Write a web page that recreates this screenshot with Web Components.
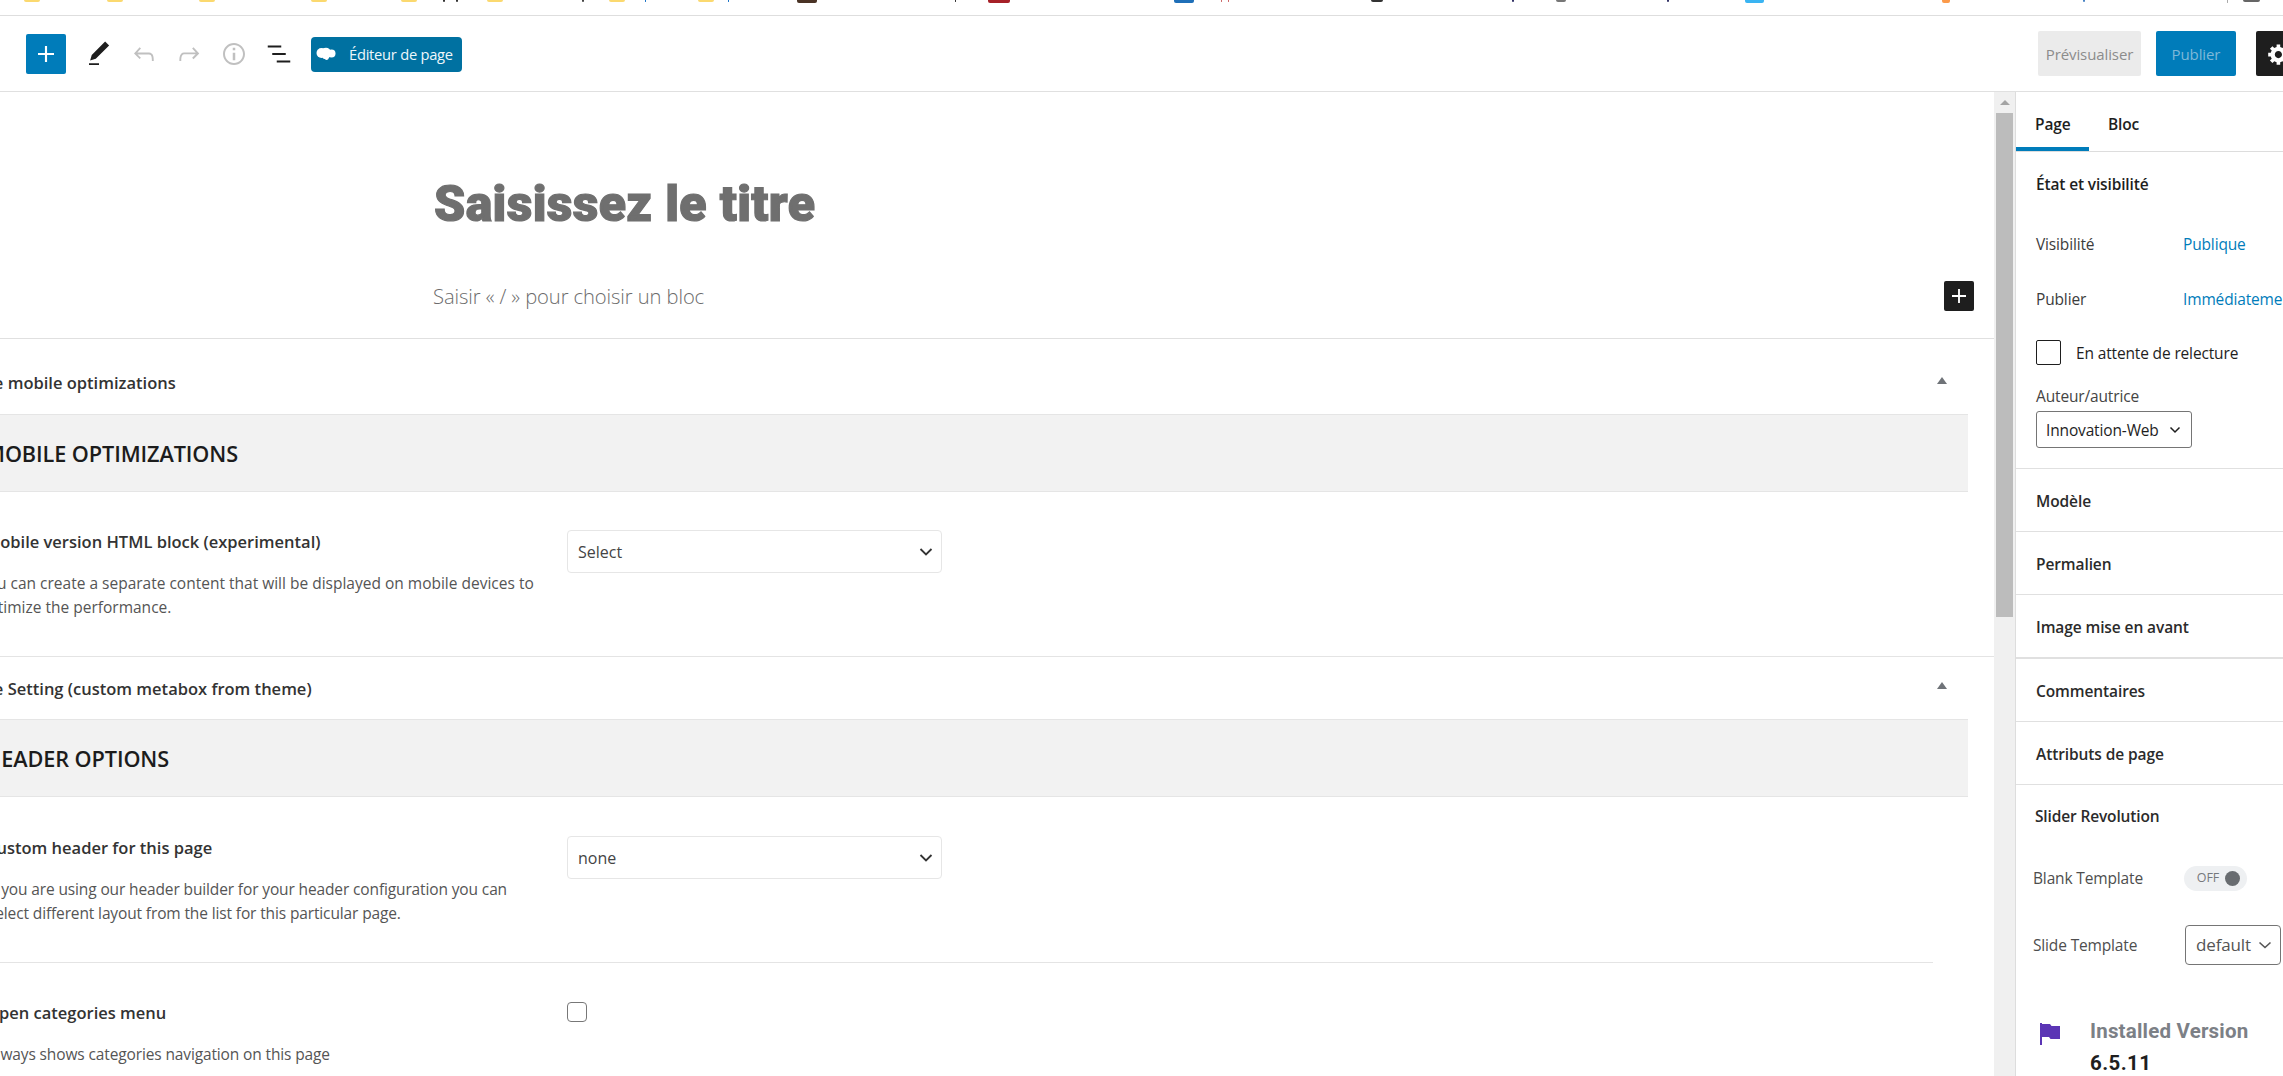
<!DOCTYPE html>
<html lang="fr"><head><meta charset="utf-8"><title>Éditeur</title>
<style>
html,body{margin:0;padding:0;background:#fff;overflow:hidden}
body{width:2283px;height:1076px;font-family:"Open Sans","Noto Sans",sans-serif;color:#1e1e1e}
</style></head><body>
<wp-app>
  <bookmark-strip slot="strip"></bookmark-strip>
  <wp-toolbar slot="toolbar"></wp-toolbar>
  <editor-main slot="main">
    <title-block></title-block>
    <meta-box heading="Page mobile optimizations" band="MOBILE OPTIMIZATIONS" pad-top="34" head-h="75" tri="38" style="--band-off:-15px">
      <meta-field label="Mobile version HTML block (experimental)" top="38" bottom="36" label-off="-15px" desc-off="-6px" style="--ds:0px">
        <span slot="desc">You can create a separate content that will be displayed on mobile devices to<br>optimize the performance.</span>
        <wp-select slot="control" value="Select"></wp-select>
      </meta-field>
    </meta-box>
    <meta-box heading="Page Setting (custom metabox from theme)" band="HEADER OPTIONS" pad-top="22" head-h="63" tri="25" ruled style="--band-off:-15px">
      <meta-field label="Custom header for this page" top="39" bottom="36" label-off="-14px" desc-off="2px" rule>
        <span slot="desc">If you are using our header builder for your header configuration you can<br>select different layout from the list for this particular page.</span>
        <wp-select slot="control" value="none"></wp-select>
      </meta-field>
      <meta-field label="Open categories menu" top="38" bottom="0" label-off="-14px" desc-off="1px">
        <span slot="desc">Always shows categories navigation on this page</span>
        <wp-check slot="control"></wp-check>
      </meta-field>
    </meta-box>
  </editor-main>
  <fake-scrollbar slot="scroll"></fake-scrollbar>
  <wp-sidebar slot="side"></wp-sidebar>
</wp-app>
<script>
const icon=(d,size=24,vb='0 0 24 24',fill='currentColor')=>`<svg width="${size}" height="${size}" viewBox="${vb}" fill="${fill}" aria-hidden="true"><path d="${d}"/></svg>`;
const P={
 plus:"M18 11.2h-5.2V6h-1.6v5.2H6v1.6h5.2V18h1.6v-5.2H18z",
 pen:"M20.1 5.1L16.9 2 6.2 12.7l-1.3 4.4 4.5-1.3L20.1 5.1zM4 20.8h8v-1.5H4v1.5z",
 undo:"M18.3 11.7c-.6-.6-1.4-.9-2.3-.9H6.7l2.9-3.3-1.1-1-4.5 5L8.5 16l1-1-2.7-2.7H16c.5 0 .9.2 1.3.5 1 1 1 3.4 1 4.5v.3h1.5v-.2c0-1.5 0-4.3-1.5-5.7z",
 redo:"M15.6 6.5l-1.1 1 2.9 3.3H8c-.9 0-1.7.3-2.3.9-1.4 1.5-1.4 4.2-1.4 5.6v.2h1.5v-.3c0-1.1 0-3.5 1-4.5.3-.3.7-.5 1.3-.5h9.2L14.5 15l1.1 1.1 4.6-4.6-4.6-5z",
 info:"M12 3.2c-4.8 0-8.8 3.9-8.8 8.8 0 4.8 3.9 8.8 8.8 8.8 4.8 0 8.8-3.9 8.8-8.8 0-4.8-4-8.8-8.8-8.8zm0 16c-4 0-7.2-3.3-7.2-7.2C4.8 8 8 4.8 12 4.8s7.2 3.3 7.2 7.2c0 4-3.2 7.2-7.2 7.2zM11 17h2v-6h-2v6zm0-8h2V7h-2v2z",
 list:"M13.8 5.2H3v1.5h10.8V5.2zm-3.6 12v1.5H21v-1.5H10.2zm7.2-6H6.6v1.5h10.8v-1.5z",
 cog:"M18 12h-2.18c-.17.7-.44 1.35-.81 1.93l1.54 1.54-2.1 2.1-1.54-1.54c-.58.36-1.23.63-1.91.79V19H8v-2.18c-.68-.16-1.33-.43-1.91-.79l-1.54 1.54-2.12-2.12 1.54-1.54c-.36-.58-.63-1.23-.79-1.91H1V9.03h2.17c.16-.7.44-1.35.8-1.94L2.43 5.55l2.1-2.1 1.54 1.54c.58-.37 1.24-.64 1.93-.81V2h3v2.18c.68.16 1.33.43 1.91.79l1.54-1.54 2.12 2.12-1.54 1.54c.36.59.64 1.24.8 1.94H18V12zm-8.5 1.5c1.66 0 3-1.34 3-3s-1.34-3-3-3-3 1.34-3 3 1.34 3 3 3z"
};
function def(name,css,html,init){
 customElements.define(name,class extends HTMLElement{
  connectedCallback(){
   if(this.shadowRoot)return;
   const r=this.attachShadow({mode:'open'});
   r.innerHTML=`<style>${css}</style>`+(typeof html==='function'?html(this):html);
   if(init)init(this,r);
  }
 });
}
const FONT='"Open Sans","Noto Sans",sans-serif';
def('wp-app',`:host{display:grid;width:2283px;height:1076px;overflow:hidden;grid-template-columns:1994px 21px 268px;grid-template-rows:16px 76px 984px}
 .s,.t{grid-column:1/4;min-width:0}`,
 `<div class="s"><slot name="strip"></slot></div><div class="t"><slot name="toolbar"></slot></div><slot name="main"></slot><slot name="scroll"></slot><slot name="side"></slot>`);

def('bookmark-strip',`:host{display:flex;height:15px;border-bottom:1px solid #dedede;align-items:flex-start;overflow:hidden}
 i{display:block;flex:none;height:2px;border-radius:0 0 2px 2px}
 .y{width:16px;background:#fbd96f}`,
 ()=>{const items=[[24,16,'y'],[107,16,'y'],[199,16,'y'],[311,16,'y'],[401,16,'y'],[443,2,'#333'],[456,2,'#333'],[487,16,'y'],[582,2,'#444'],[609,16,'y'],[645,1,'#1a73c7'],[698,16,'y'],[728,1,'#1a73c7'],[797,20,'#4a3325',3],[955,1,'#333'],[988,22,'#a62028',3],[1174,20,'#1f6fb8',3],[1221,1,'#c66'],[1228,1,'#c66'],[1371,12,'#333',2],[1512,2,'#336'],[1556,10,'#777',2],[1667,2,'#336'],[1745,19,'#3ab4f2',3],[1942,8,'#fb9a4b',3],[2083,2,'#4a84c4'],[2227,1,'#aaa',3],[2243,17,'#666',2]];
  let x=0,o='';for(const [a,w,c,h] of items){const y=c==='y';o+=`<i class="${y?'y':''}" style="margin-left:${a-x}px;width:${w}px;${y?'':`background:${c};`}${h?`height:${h}px`:''}"></i>`;x=a+w;}return o;});

def('tool-icon',`:host{display:flex;width:30px;height:30px;flex:none;color:var(--c,#1e1e1e)} svg{width:30px;height:30px;display:block}`,
 h=>icon(P[h.getAttribute('name')],30));

def('wp-toolbar',`:host{display:flex;height:75px;border-bottom:1px solid #e0e0e0;align-items:center;padding-left:26px;overflow:hidden;font-family:${FONT}}
 .add{width:40px;height:40px;background:#007cba;color:#fff;border-radius:2px;display:flex;align-items:center;justify-content:center;flex:none}
 .add svg{width:32px;height:32px}
 .tools{display:flex;align-items:center;gap:15px;margin-left:18px}
 .dim{--c:#c0c0c0}
 .edit{margin-left:17px;margin-top:1px;height:35px;width:151px;box-sizing:border-box;background:#0071a1;color:#eef7fb;border-radius:4px;display:flex;align-items:center;padding-left:5px;font-size:14.700px;letter-spacing:-.25px;flex:none;white-space:nowrap}
 .edit svg{margin-right:12px;flex:none}
 .right{margin-left:auto;display:flex;align-items:center;flex:none;width:245px;overflow:hidden;height:45px}
 .btn{height:45px;box-sizing:border-box;border-radius:2px;display:flex;align-items:center;justify-content:center;font-size:15px;flex:none;letter-spacing:-.1px}
 .pv{width:103px;background:#ebebeb;color:#8c8c8c}
 .pb{width:80px;background:#007cba;color:#7db8d8;margin-left:15px}
 .gs{width:45px;background:#1e1e1e;color:#fff;margin-left:20px}
 .gs svg{width:24px;height:24px}`,
 `<div class="add">${icon(P.plus)}</div>
  <div class="tools"><tool-icon name="pen"></tool-icon><tool-icon class="dim" name="undo"></tool-icon><tool-icon class="dim" name="redo"></tool-icon><tool-icon class="dim" name="info"></tool-icon><tool-icon name="list"></tool-icon></div>
  <div class="edit"><svg width="21" height="16" viewBox="0 0 21 16" fill="#fff"><circle cx="5.500" cy="7" r="5"/><circle cx="10" cy="6.500" r="4.800"/><circle cx="15.500" cy="7.500" r="4"/><path d="M6 10h8l-2 3.500c-1.500.8-2.600.3-3-.5-1.300.3-2.600-.7-3-3z"/></svg><span>Éditeur de page</span></div>
  <div class="right"><div class="btn pv">Prévisualiser</div><div class="btn pb">Publier</div><div class="btn gs">${icon(P.cog,24,'0 0 20 20')}</div></div>`);

def('editor-main',`:host{display:block;overflow:hidden;min-width:0;height:984px;font-family:${FONT}}`,`<slot></slot>`);

def('title-block',`:host{display:block;height:247px;box-sizing:border-box;border-bottom:1px solid #e0e0e0;position:relative}
 h1{margin:0;padding:84px 0 0 434px;font:900 50px/56px Roboto,"Noto Sans",sans-serif;color:#6f6f6f;letter-spacing:.35px;-webkit-text-stroke:1.200px #6f6f6f}
 p{margin:0;padding:49px 0 0 433px;font:300 20.200px/30px ${FONT};color:#6c6c6c;letter-spacing:-.1px}
 .plus{position:absolute;left:1944px;top:189px;width:30px;height:30px;background:#1e1e1e;color:#fff;border-radius:2px;display:flex;align-items:center;justify-content:center}`,
 `<h1>Saisissez le titre</h1><p>Saisir « / » pour choisir un bloc</p><div class="plus">${icon(P.plus,28)}</div>`);

def('meta-box',`:host{display:block;--off:-35px}
 .head{box-sizing:border-box;display:flex;width:1994px;position:relative;font-size:16.500px;font-weight:600;color:#333;letter-spacing:0;line-height:20px}
 :host([ruled]) .head{border-top:1px solid #e4e4e4}
 .head span{margin-left:var(--off);white-space:nowrap}
 .tri{position:absolute;left:1937px;width:0;height:0;border-left:5px solid transparent;border-right:5px solid transparent;border-bottom:7px solid #6f7378}
 .band{width:1968px;height:78px;box-sizing:border-box;background:#f2f2f2;border-top:1px solid #e5e5e5;border-bottom:1px solid #e5e5e5;display:flex;align-items:center;font-size:21.700px;font-weight:600;color:#1c1c1c;letter-spacing:-.1px}
 .band span{margin-left:var(--band-off);white-space:nowrap}`,
 h=>`<div class="head" style="height:${h.getAttribute('head-h')}px;padding-top:${h.getAttribute('pad-top')}px"><span>${h.getAttribute('heading')}</span><i class="tri" style="top:${h.getAttribute('tri')}px"></i></div><div class="band"><span>${h.getAttribute('band')}</span></div><slot></slot>`);

def('meta-field',`:host{display:block;width:1933px;overflow:hidden}
 .row{display:flex;align-items:flex-start;box-sizing:border-box}
 .txt{width:567px;flex:none;overflow:hidden}
 .l{font-size:16.500px;font-weight:600;color:#333;line-height:24px;white-space:nowrap;letter-spacing:0}
 .d{font-size:15.500px;color:#555;line-height:24px;margin-top:17px;padding-bottom:1px;white-space:nowrap;letter-spacing:var(--ds,-.13px)}
 :host([rule]){border-bottom:1px solid #e4e4e4}`,
 h=>`<div class="row" style="padding-top:${h.getAttribute('top')}px;padding-bottom:${h.getAttribute('bottom')}px"><div class="txt"><div style="margin-left:${h.getAttribute('label-off')}"><div class="l">${h.getAttribute('label')}</div><div class="d" style="margin-left:${h.getAttribute('desc-off')}"><slot name="desc"></slot></div></div></div><div><slot name="control"></slot></div></div>`);

def('wp-select',`:host{display:flex;width:375px;height:43px;box-sizing:border-box;border:1px solid #e6e6e6;border-radius:4px;align-items:center;padding:0 8px 0 10px;justify-content:space-between;font:16px/20px ${FONT};color:#444;background:#fff}
 svg{flex:none}`,
 h=>`<span style="padding-top:1px">${h.getAttribute('value')}</span><svg width="14" height="10" viewBox="0 0 14 10" fill="none" stroke="#333" stroke-width="1.800"><path d="M1.500 2l5.500 5.500L12.500 2"/></svg>`);
def('wp-check',`:host{display:block;width:20px;height:20px;margin-top:1px;box-sizing:border-box;border:1px solid #777;border-radius:4px;background:#fff}`,``);

def('fake-scrollbar',`:host{display:block;background:#f0f0f0;height:984px;box-sizing:border-box;padding:0 2px}
 .up{height:21px;display:flex;align-items:center;justify-content:center}
 .up i{display:block;width:0;height:0;border-left:5px solid transparent;border-right:5px solid transparent;border-bottom:5px solid #a3a3a3}
 .th{height:504px;background:#bcbcbc}`,`<div class="up"><i></i></div><div class="th"></div>`);

def('side-row',`:host{display:flex;align-items:center;box-sizing:border-box;border-bottom:1px solid #e0e0e0;padding:2px 0 0 20px;font-size:15.500px;font-weight:600;color:#2b2b2b;letter-spacing:-.1px}`,`<slot></slot>`);

def('wp-sidebar',`:host{display:block;width:268px;height:984px;overflow:hidden;border-left:1px solid #ddd;box-sizing:border-box;font:15.500px/20px ${FONT};color:#1e1e1e;letter-spacing:-.15px}
 .tabs{display:flex;height:60px;border-bottom:1px solid #ddd;box-sizing:border-box;font-weight:600;width:300px}
 .tab{display:flex;align-items:center;height:59px;padding-top:5px;box-sizing:border-box;padding-left:19px;width:73px}
 .tab.on{box-shadow:inset 0 -4px 0 #007cba}
 .st{padding:22px 0 0 20px;height:317px;box-sizing:border-box;border-bottom:1px solid #e0e0e0;white-space:nowrap}
 .hd{font-weight:600;line-height:20px}
 .kv{display:flex;margin-top:35px}
 .kv>b{font-weight:400;width:147px;flex:none;color:#3c3c3c}
 .kv>a{color:#007cba}
 .cb{display:flex;align-items:center;margin-top:31px;font-size:15.500px}
 .cb i{display:block;width:25px;height:25px;border:1px solid #1e1e1e;border-radius:2px;box-sizing:border-box;margin-right:15px}
 .au{margin-top:20px;color:#444;line-height:22px}
 .sel{width:156px;height:37px;margin-top:4px;box-sizing:border-box;border:1px solid #757575;border-radius:3px;display:flex;align-items:center;padding:0 10px 0 9px;justify-content:space-between;color:#1e1e1e}
 .sel svg,.sl svg{flex:none}
 .r1{height:63px}.r2{height:63px}.r3{height:63.500px}
 .sr{padding:21px 0 0 0}
 .sr .h{padding-left:19px;font-weight:600;color:#2b2b2b;line-height:20px}
 .line{display:flex;align-items:center;padding-left:17px;color:#4e4e4e}
 .line>span{width:152px;flex:none}
 .tg{width:63px;height:25px;margin-left:-1px;background:#eef0f2;border-radius:13px;display:flex;align-items:center;justify-content:flex-end;gap:6px;padding-right:7px;box-sizing:border-box;font-size:12.500px;color:#76797c}
 .tg i{display:block;width:15px;height:15px;border-radius:50%;background:#686c70}
 .sl{width:96px;height:40px;box-sizing:border-box;border:1px solid #757575;border-radius:4px;display:flex;align-items:center;justify-content:space-between;padding:0 8px 0 10px;font-size:17px;color:#555;flex:none}
 .ver{display:flex;padding:54px 0 0 24px}
 .ver svg{flex:none;margin-right:30px;margin-top:4px}
 .ver .a{font:700 20.500px/24px Roboto,sans-serif;color:#7c8086;letter-spacing:.2px}
 .ver .b{font:700 20.500px/24px Roboto,sans-serif;color:#1e1e1e;margin-top:8px;letter-spacing:.4px}`,
 `<div class="tabs"><div class="tab on">Page</div><div class="tab">Bloc</div></div>
 <div class="st"><div class="hd">État et visibilité</div>
  <div class="kv" style="margin-top:40px"><b>Visibilité</b><a>Publique</a></div>
  <div class="kv"><b>Publier</b><a>Immédiatement</a></div>
  <div class="cb"><i></i><span>En attente de relecture</span></div>
  <div class="au">Auteur/autrice</div>
  <div class="sel"><span>Innovation-Web</span><svg width="12" height="8" viewBox="0 0 12 8" fill="none" stroke="#1e1e1e" stroke-width="1.500"><path d="M1.500 1.500L6 6l4.500-4.500"/></svg></div>
 </div>
 <side-row class="r1">Modèle</side-row><side-row class="r2">Permalien</side-row><side-row class="r3" style="border-bottom-width:2px">Image mise en avant</side-row><side-row class="r2">Commentaires</side-row><side-row class="r2">Attributs de page</side-row>
 <div class="sr"><div class="h">Slider Revolution</div>
  <div class="line" style="margin-top:40px"><span>Blank Template</span><div class="tg">OFF<i></i></div></div>
  <div class="line" style="margin-top:34px"><span>Slide Template</span><div class="sl"><span>default</span><svg width="14" height="8" viewBox="0 0 14 8" fill="none" stroke="#555" stroke-width="1.600"><path d="M1.500 1.500L7 6.500l5.500-5"/></svg></div></div>
  <div class="ver"><svg width="20" height="22" viewBox="0 0 20 22" fill="#5b35b5"><path d="M0 0h2v22H0zM2 1h8l1.500 2H20v13H10.500L9 14H2z"/></svg><div><div class="a">Installed Version</div><div class="b">6.5.11</div></div></div>
 </div>`);
</script>
</body></html>
